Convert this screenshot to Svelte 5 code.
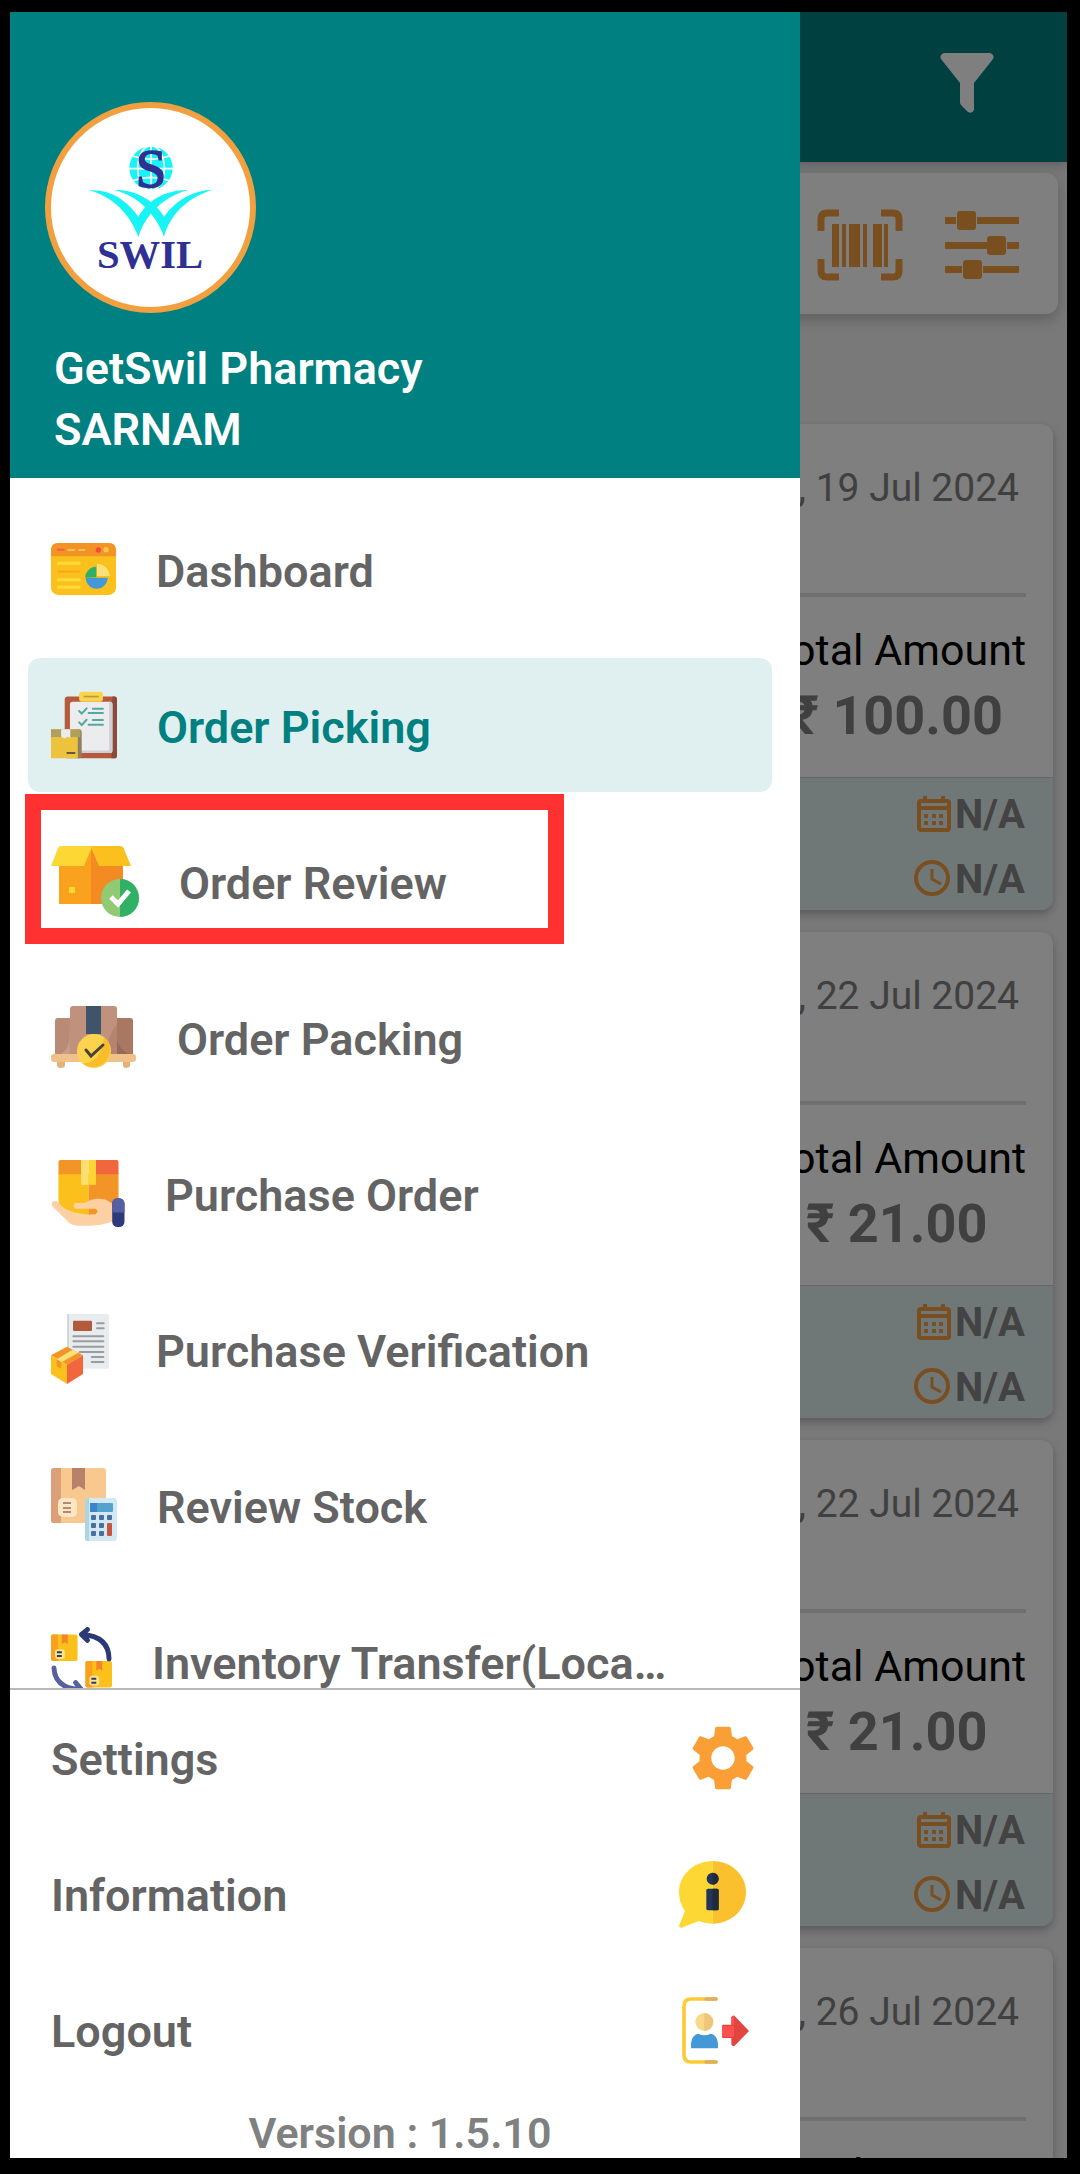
<script>
  const menu = [
    { id: 'dashboard', label: 'Dashboard' },
    { id: 'picking', label: 'Order Picking' },
    { id: 'review', label: 'Order Review', marked: true },
    { id: 'packing', label: 'Order Packing' },
    { id: 'purchase', label: 'Purchase Order' },
    { id: 'verification', label: 'Purchase Verification' },
    { id: 'stock', label: 'Review Stock' },
    { id: 'transfer', label: 'Inventory Transfer(Loca…' },
  ];

  const orders = [
    { date: 'Fri, 19 Jul 2024', amount: '100.00' },
    { date: 'Mon, 22 Jul 2024', amount: '21.00' },
    { date: 'Mon, 22 Jul 2024', amount: '21.00' },
    { date: 'Fri, 26 Jul 2024', amount: '21.00' },
  ];

  let active = 'picking';
</script>

<div class="screen">
  <main class="page">
    <header class="topbar">
      <button class="icon-btn" aria-label="Filter">
        <svg width="54" height="60" viewBox="0 0 54 60">
          <path fill="#fff" d="M4 0h46q5 2 3 6L34 30v27q-2 4-6 2l-7-7q-1-1-1-3V30L1 6Q-1 2 4 0z" />
        </svg>
      </button>
    </header>

    <section class="tools">
      <button class="icon-btn" aria-label="Scan barcode">
        <svg width="86" height="72" viewBox="0 0 86 72">
          <g fill="none" stroke="#f49f3f" stroke-width="7">
            <path d="M4 22V10q0-6 6-6h12M64 4h12q6 0 6 6v12M82 50v12q0 6-6 6H64M22 68H10q-6 0-6-6V50" />
          </g>
          <path fill="#f49f3f" d="M15 15h7v43h-7zM25 15h4v43h-4zM32 15h11v43H32zM46 15h4v43h-4zM56 15h9v43h-9zM67 15h4v43h-4z" />
        </svg>
      </button>
      <button class="icon-btn" aria-label="Options">
        <svg width="74" height="68" viewBox="0 0 74 68">
          <path fill="#f49f3f" d="M0 6h11v7H0zM32 6h42v7H32zM0 31h42v7H0zM62 31h12v7H62zM0 55h17v7H0zM38 55h36v7H38z" />
          <g fill="#f49f3f">
            <rect x="12" y="0" width="19" height="19" rx="3" />
            <rect x="42" y="25" width="19" height="19" rx="3" />
            <rect x="18" y="49" width="19" height="19" rx="3" />
          </g>
        </svg>
      </button>
    </section>

    <section class="orders">
      {#each orders as order}
        <article class="card">
          <div class="card-head">
            <time>{order.date}</time>
          </div>
          <div class="card-total">
            <span class="total-label">Total Amount</span>
            <strong>₹ {order.amount}</strong>
          </div>
          <div class="card-foot">
            <span class="meta">
              <svg width="34" height="36" viewBox="0 0 34 36" fill="#f29d40">
                <path fill-rule="evenodd" d="M6 0h4v3h14V0h4v3h2q4 0 4 4v25q0 4-4 4H4q-4 0-4-4V7q0-4 4-4h2zM4 7v3h26V7zM4 14v18h26V14z" />
                <path d="M7 18h4v4H7zM15 18h4v4h-4zM22 18h4v4h-4zM7 25h4v4H7zM15 25h4v4h-4zM22 25h4v4h-4z" />
              </svg>N/A
            </span>
            <span class="meta">
              <svg width="37" height="37" viewBox="0 0 37 37" fill="none" stroke="#f29d40" stroke-width="3">
                <circle cx="18" cy="18" r="16" stroke-width="4" />
                <path d="M18 9v10l9 5" />
              </svg>N/A
            </span>
          </div>
        </article>
      {/each}
    </section>
  </main>

  <div class="scrim"></div>

  <aside class="drawer">
    <header class="profile">
      <svg class="logo" viewBox="0 0 597 597" role="img" aria-label="SWIL">
        <circle cx="300" cy="180" r="65" fill="#18f4f6" />
        <g fill="none" stroke="#fff" stroke-width="5">
          <ellipse cx="300" cy="180" rx="40" ry="67" />
          <path d="M300 113v134M233 182h134M245 144q55 20 110 0M245 218q55-20 110 0" />
        </g>
        <text x="300" y="237" text-anchor="middle" class="logo-s">S</text>
        <path fill="#18f4f6" d="M112 247C180 242 230 280 262 326C295 270 350 246 412 246C350 262 285 310 262 388C240 320 180 262 112 247z" />
        <path fill="#18f4f6" d="M190 246C250 244 308 275 339 326C375 275 430 246 485 245C420 265 360 310 339 386C316 320 260 262 190 246z" />
        <text x="297" y="479" text-anchor="middle" class="logo-name">SWIL</text>
      </svg>
      <div class="account">
        <div>GetSwil Pharmacy</div>
        <div>SARNAM</div>
      </div>
    </header>

    <nav>
      {#each menu as item (item.id)}
        <button
          class="item"
          class:active={item.id === active}
          class:marked={item.marked}
          on:click={() => (active = item.id)}
        >
          {#if item.id === 'dashboard'}
            <svg width="65" height="52" viewBox="0 0 195 156">
              <rect width="195" height="156" rx="22" fill="#fcc01c" />
              <path d="M0 40V22Q0 0 22 0h151q22 0 22 22v18z" fill="#f39326" />
              <path d="M20 20h18" stroke="#f1603c" stroke-width="6" stroke-linecap="round" />
              <path d="M52 21h17M84 21h16" stroke="#f5c45a" stroke-width="6" stroke-linecap="round" />
              <circle cx="142" cy="21" r="8" fill="#ef4f3e" />
              <circle cx="165" cy="20" r="8" fill="#fcc64a" />
              <path d="M22 61h63M22 110h63M22 133h63" stroke="#fddb3c" stroke-width="9" stroke-linecap="round" />
              <path d="M22 86h63" stroke="#f7a41f" stroke-width="5" stroke-linecap="round" />
              <path d="M138 104h32a32 32 0 0 1-66 0z" fill="#4398d8" />
              <path d="M136 103V71a33 33 0 0 0-33 33z" fill="#30b066" />
              <path d="M138 99V62a38 38 0 0 1 38 37z" fill="#fde07a" />
            </svg>
          {:else if item.id === 'picking'}
            <svg width="66" height="68" viewBox="0 0 202 204">
              <rect x="42" y="15" width="160" height="189" rx="9" fill="#b55a3c" />
              <path d="M188 15h6q8 0 8 9v171q0 9-9 9h-8z" fill="#8d4a3a" />
              <rect x="58" y="31" width="130" height="157" rx="8" fill="#ececef" />
              <path d="M178 31h4q6 0 6 8v141q0 8-8 8H86v-8h92z" fill="#cfd0d5" />
              <rect x="86" y="0" width="73" height="31" rx="9" fill="#fcd34c" />
              <path d="M100 15h46" stroke="#b99a3c" stroke-width="5" />
              <g fill="none" stroke="#50a9a0" stroke-width="6" stroke-linecap="round">
                <path d="M86 59l8 8 15-16M128 52h31M115 65h44M86 94l8 8 15-16M128 87h31M115 101h44" />
              </g>
              <path d="M0 115h82q8 0 8 7v74q0 8-8 8H0z" fill="#edc23d" />
              <path d="M82 115q12 0 12 10v70q0 9-12 9z" fill="#8d7f60" />
              <path d="M0 115h90v24H0z" fill="#b3a058" />
              <path d="M31 115h28v27l-9-4-8 5-11-5z" fill="#ececef" />
              <path d="M50 188h22" stroke="#5f5947" stroke-width="6" stroke-linecap="round" />
            </svg>
          {:else if item.id === 'review'}
            <svg width="88" height="71" viewBox="0 0 88 71">
              <path d="M8 4h33v54H8z" fill="#faa21e" />
              <path d="M40 2l32 10v46H40z" fill="#f48a22" />
              <path d="M10 0h30v3l-7 17H0L7 2q1-2 3-2z" fill="#fdd835" />
              <path d="M40 0h29q3 0 4 3l7 17H48L40 2z" fill="#fbc01e" />
              <path d="M18 41h6v6h-6z" fill="#fdd835" />
              <circle cx="69" cy="52" r="19" fill="#91ca72" />
              <path d="M69 33a19 19 0 0 1 0 38z" fill="#30b166" />
              <path d="M60 51l7 7 11-13" fill="none" stroke="#fff" stroke-width="5" />
            </svg>
          {:else if item.id === 'packing'}
            <svg width="86" height="62" viewBox="0 0 86 62">
              <path d="M4 48V15q0-3 3-3h16v36z" fill="#b98a76" />
              <path d="M64 12h15q3 0 3 3v33H60z" fill="#a97862" />
              <path d="M66 12v22q2 9 12 14H60V12z" fill="#946a58" />
              <path d="M19 48V3q0-3 3-3h41q3 0 3 3v18q-6 10-8 27z" fill="#c0917c" />
              <path d="M66 18q-9 10-10 30h10z" fill="#b58470" />
              <path d="M18 14v20q-1 10-8 14h9z" fill="#c99d88" />
              <path d="M35 0h15v28H35z" fill="#3f5468" />
              <path d="M6 53h8v7q-1 2-4 2-4 0-4-3zM72 53h7v7q-1 2-4 2t-3-3z" fill="#e3b277" />
              <rect y="48" width="85" height="8" rx="3" fill="#f0c289" />
              <circle cx="43" cy="45" r="17" fill="#fcd34c" />
              <path d="M53 31a17 17 0 0 1-22 26q18 2 22-26z" fill="#f9bd2c" />
              <path d="M35 44l5 6 12-11" fill="none" stroke="#4b4338" stroke-width="3" stroke-linecap="round" />
            </svg>
          {:else if item.id === 'purchase'}
            <svg width="74" height="67" viewBox="0 0 222 202">
              <path d="M22 40h91v126H70Q22 150 22 120z" fill="#fbc01c" />
              <path d="M113 40h90v100l-90 26z" fill="#f29426" />
              <path d="M28 0h62v43H22V6q0-6 6-6z" fill="#f29426" />
              <path d="M135 0h62q6 0 6 6v37h-68z" fill="#f1663c" />
              <path d="M90 0h23v75H90z" fill="#fddf6f" />
              <path d="M113 0h22v75h-22z" fill="#fdd633" />
              <path
                d="M20 127Q46 162 112 164H134Q146 156 134 147H74Q62 140 72 130H100Q130 110 165 120L190 134V184Q150 198 120 198H80Q60 198 45 180L4 140Q-3 128 8 124Q14 122 20 127z"
                fill="#fcd0a2"
              />
              <path d="M113 148h21q9 8 0 16h-21z" fill="#f29426" />
              <rect x="184" y="115" width="37" height="87" rx="16" fill="#2d3a7c" />
              <path d="M184 158v-27q0-16 18-16t19 16v27z" fill="#5560a0" />
            </svg>
          {:else if item.id === 'verification'}
            <svg width="65" height="70" viewBox="0 0 195 210">
              <rect x="50" y="0" width="124" height="164" rx="5" fill="#e8ecee" />
              <path d="M51 0v110" stroke="#c6cbce" stroke-width="4" />
              <rect x="66" y="20" width="57" height="31" rx="3" fill="#b35a3a" />
              <path
                d="M138 28h20M138 43h20M67 67h90M67 82h90M67 98h90M86 114h71M122 129h35M122 144h35"
                stroke="#9a9da0"
                stroke-width="6"
                stroke-linecap="round"
              />
              <path d="M48 98l48 26-48 28-48-28z" fill="#f29426" />
              <path d="M0 124l48 28v58L0 180z" fill="#fbc01c" />
              <path d="M96 124l-48 28v58l48-30z" fill="#f1663c" />
              <path d="M65 107l17 9-51 29-14-9z" fill="#fde07a" />
              <path d="M17 136l14 9v19l-14-7z" fill="#f29426" />
            </svg>
          {:else if item.id === 'stock'}
            <svg width="66" height="74" viewBox="0 0 66 74">
              <rect width="55" height="55" rx="3" fill="#f9c88f" />
              <path d="M3 0h7v55H3q-3 0-3-3V3q0-3 3-3z" fill="#dca078" />
              <path d="M21 0h13v22l-6-4-7 4z" fill="#b9806a" />
              <rect x="7" y="30" width="19" height="19" rx="5" fill="#fde6c4" />
              <path d="M12 35h8M12 40h8M12 44h8" stroke="#b58a72" stroke-width="2" />
              <rect x="34" y="30" width="32" height="43" rx="3" fill="#d3e8f2" />
              <path d="M34 33q0-3 3-3h1v43h-1q-3 0-3-3z" fill="#a9d6e0" />
              <rect x="39" y="35" width="23" height="9" rx="1" fill="#55a3cc" />
              <path d="M39 35h7v9h-7z" fill="#3f82cc" />
              <g fill="#47709c">
                <rect x="40" y="47" width="5" height="5" rx="1" />
                <rect x="48" y="47" width="5" height="5" rx="1" />
                <rect x="56" y="47" width="5" height="5" rx="1" />
                <rect x="40" y="55" width="5" height="5" rx="1" />
                <rect x="48" y="55" width="5" height="5" rx="1" />
                <rect x="40" y="63" width="5" height="5" rx="1" />
                <rect x="48" y="63" width="5" height="5" rx="1" />
              </g>
              <rect x="56" y="55" width="5" height="13" rx="1" fill="#c8553d" />
            </svg>
          {:else}
            <svg width="61" height="68" viewBox="0 0 62 68">
              <g id="parcel">
                <rect x="0" y="7" width="27" height="27" rx="2" fill="#fbc01c" />
                <path d="M2 7h5v27H2q-2 0-2-2V9q0-2 2-2z" fill="#f9a01f" />
                <path d="M11 7h6v10l-3-2-3 2z" fill="#f4862a" />
                <rect x="4" y="22" width="10" height="10" rx="3" fill="#fde38a" />
                <path d="M6 25h5M6 29h5" stroke="#2b3a6e" stroke-width="2" />
              </g>
              <use href="#parcel" x="35" y="27" />
              <g fill="none" stroke-width="5" stroke-linecap="round" stroke-linejoin="round">
                <path d="M59 32q0-23-27-25M37 2l-6 5 6 6" stroke="#2b3a75" />
                <path d="M3 41q1 20 25 22M25 56l6 7-6 5" stroke="#5560a0" />
              </g>
            </svg>
          {/if}
          <span>{item.label}</span>
        </button>
      {/each}
    </nav>

    <footer>
      <button class="foot-row">
        <span>Settings</span>
        <svg width="62" height="64" viewBox="2.5 2.2 19 19.6">
          <path
            fill="#f99f35"
            d="M19.14 12.94c.04-.3.06-.61.06-.94 0-.32-.02-.64-.07-.94l2.03-1.58c.18-.14.23-.41.12-.61l-1.92-3.32c-.12-.22-.37-.29-.59-.22l-2.39.96c-.5-.38-1.03-.7-1.62-.94l-.36-2.54c-.04-.24-.24-.41-.48-.41h-3.84c-.24 0-.43.17-.47.41l-.36 2.54c-.59.24-1.13.57-1.62.94l-2.39-.96c-.22-.08-.47 0-.59.22L2.74 8.87c-.12.21-.08.47.12.61l2.03 1.58c-.05.3-.09.63-.09.94s.02.64.07.94l-2.03 1.58c-.18.14-.23.41-.12.61l1.92 3.32c.12.22.37.29.59.22l2.39-.96c.5.38 1.03.7 1.62.94l.36 2.54c.05.24.24.41.48.41h3.84c.24 0 .44-.17.47-.41l.36-2.54c.59-.24 1.13-.56 1.62-.94l2.39.96c.22.08.47 0 .59-.22l1.92-3.32c.12-.22.07-.47-.12-.61l-2.01-1.58zM12 15.6c-1.98 0-3.6-1.62-3.6-3.6s1.62-3.6 3.6-3.6 3.6 1.62 3.6 3.6-1.62 3.6-3.6 3.6z"
          />
        </svg>
      </button>
      <button class="foot-row">
        <span>Information</span>
        <svg width="75" height="67" viewBox="0 0 225 201">
          <path fill="#fdd835" d="M101 0C44 0 0 42 0 94q0 32 18 56L0 194q0 8 8 6l52-20q18 8 41 8z" />
          <path fill="#fbc02d" d="M101 0c56 0 100 42 100 94s-44 94-100 94z" />
          <circle cx="101" cy="53" r="18" fill="#24335a" />
          <rect x="82" y="83" width="37" height="65" rx="5" fill="#24335a" />
          <path fill="#1d2c38" d="M101 35a18 18 0 0 1 0 36zM101 83h13q5 0 5 5v55q0 5-5 5h-13z" />
        </svg>
      </button>
      <button class="foot-row">
        <span>Logout</span>
        <svg width="72" height="67" viewBox="0 0 216 201">
          <path d="M102 6H28Q6 6 6 28v145q0 22 22 22h74" fill="none" stroke="#fccb35" stroke-width="11" stroke-linecap="round" />
          <path d="M72 6h30M72 195h30" stroke="#dfae5c" stroke-width="11" stroke-linecap="round" />
          <circle cx="67" cy="75" r="27" fill="#fbd78a" />
          <path d="M67 48a27 27 0 0 1 0 54z" fill="#eec679" />
          <path d="M27 154q-2-40 22-44 18 9 37 0 24 4 22 44z" fill="#4398d8" />
          <path d="M124 83h24V62q2-9 10-5l43 45-43 44q-8 4-10-4v-19h-24q-4 0-4-4V87q0-4 4-4z" fill="#e2453f" />
          <path d="M120 83h37V56l-9 4v23zM120 87h36v32h-36z" fill="#ff5050" />
        </svg>
      </button>
      <p class="version">Version : 1.5.10</p>
    </footer>
  </aside>
</div>

<style>
  :global(body) {
    margin: 0;
    background: #000;
  }

  .screen {
    position: relative;
    box-sizing: border-box;
    height: 100vh;
    border: solid #000;
    border-width: 12px 13px 16px 10px;
    overflow: hidden;
    font-family: Roboto, 'Liberation Sans', sans-serif;
  }

  button {
    padding: 0;
    border: none;
    background: none;
    font: inherit;
    color: inherit;
    cursor: pointer;
  }

  svg {
    display: block;
    flex: none;
  }

  /* page behind the drawer */
  .page {
    height: 100%;
    background: #f2f2f2;
    overflow: hidden;
  }

  .topbar {
    display: flex;
    justify-content: flex-end;
    box-sizing: border-box;
    height: 150px;
    padding: 41px 73px 0;
    background: #008080;
    box-shadow: 0 2px 12px rgba(0, 0, 0, 0.25);
  }

  .topbar .icon-btn {
    align-self: flex-start;
  }

  .tools {
    display: flex;
    align-items: center;
    justify-content: flex-end;
    gap: 42px;
    box-sizing: border-box;
    height: 141px;
    margin: 11px 9px 110px;
    padding: 2px 39px 0 0;
    border-radius: 12px;
    background: #fff;
    box-shadow: 0 6px 14px rgba(0, 0, 0, 0.2);
  }

  .orders {
    display: flex;
    flex-direction: column;
    gap: 22px;
    padding: 0 14px;
  }

  .card {
    border-radius: 12px;
    background: #fff;
    box-shadow: 0 4px 8px rgba(0, 0, 0, 0.25);
    overflow: hidden;
  }

  .card-head {
    box-sizing: border-box;
    height: 173px;
    margin: 0 27px;
    padding: 40px 7px 0;
    border-bottom: 4px solid #dedede;
    text-align: right;
    font-size: 39px;
    line-height: 48px;
    color: #808080;
  }

  .card-total {
    display: flex;
    flex-direction: column;
    align-items: center;
    width: max-content;
    margin-left: auto;
    padding: 23px 27px 25px;
  }

  .total-label {
    font-size: 43px;
    line-height: 60px;
    color: #000;
  }

  .card-total strong {
    font-size: 54px;
    line-height: 72px;
    color: #808080;
  }

  .card-foot {
    display: flex;
    flex-direction: column;
    align-items: flex-end;
    box-sizing: border-box;
    height: 133px;
    padding: 4px 28px 0;
    border-top: 1px solid #ccc;
    background: #e0f0ef;
  }

  .meta {
    display: flex;
    flex: none;
    align-items: center;
    gap: 4px;
    height: 65px;
    font-size: 40px;
    font-weight: 700;
    color: #868686;
  }

  .meta svg {
    margin-bottom: 2px;
  }

  .scrim {
    position: absolute;
    inset: 0;
    background: rgba(0, 0, 0, 0.5);
  }

  .drawer {
    position: absolute;
    inset: 0 auto 0 0;
    display: flex;
    flex-direction: column;
    width: min(790px, 85%);
    background: #fff;
    font-size: 45px;
    font-weight: 600;
    color: #646464;
  }

  .profile {
    padding: 90px 35px 18px;
    background: #008080;
  }

  .logo {
    width: 199px;
    height: 199px;
    border: 6px solid #f2a03f;
    border-radius: 50%;
    background: #fff;
  }

  .logo-s {
    font: 400 165px 'Liberation Serif', serif;
    fill: #2e3192;
    stroke: #2e3192;
    stroke-width: 5px;
  }

  .logo-name {
    font: 700 122px 'Liberation Serif', serif;
    fill: #2e3192;
  }

  .account {
    margin-top: 25px;
    padding-left: 9px;
    line-height: 61px;
    color: #fff;
  }

  nav {
    display: flex;
    flex: 1;
    flex-direction: column;
    gap: 22px;
    min-height: 0;
    padding: 24px 28px 0 18px;
    overflow-y: auto;
    scrollbar-width: none;
  }

  .item {
    position: relative;
    display: flex;
    flex: none;
    align-items: center;
    gap: 40px;
    height: 134px;
    padding-left: 23px;
    border-radius: 12px;
    text-align: left;
  }

  .item span {
    padding-top: 5px;
    white-space: nowrap;
  }

  .item.active {
    background: #e0efef;
    color: #008080;
  }

  .item.marked::after {
    content: '';
    position: absolute;
    top: -20px;
    left: -3px;
    box-sizing: border-box;
    width: 539px;
    height: 150px;
    border: 16px solid #ff3131;
  }

  footer {
    border-top: 2px solid #b8b8b8;
  }

  .foot-row {
    display: flex;
    align-items: center;
    justify-content: space-between;
    width: 100%;
    height: 136px;
    padding: 0 46px 0 41px;
  }

  .foot-row span {
    padding-top: 3px;
  }

  .version {
    margin: 0;
    padding: 10px 10px 0 0;
    text-align: center;
    font-size: 43px;
    line-height: 50px;
    color: #808080;
  }
</style>
